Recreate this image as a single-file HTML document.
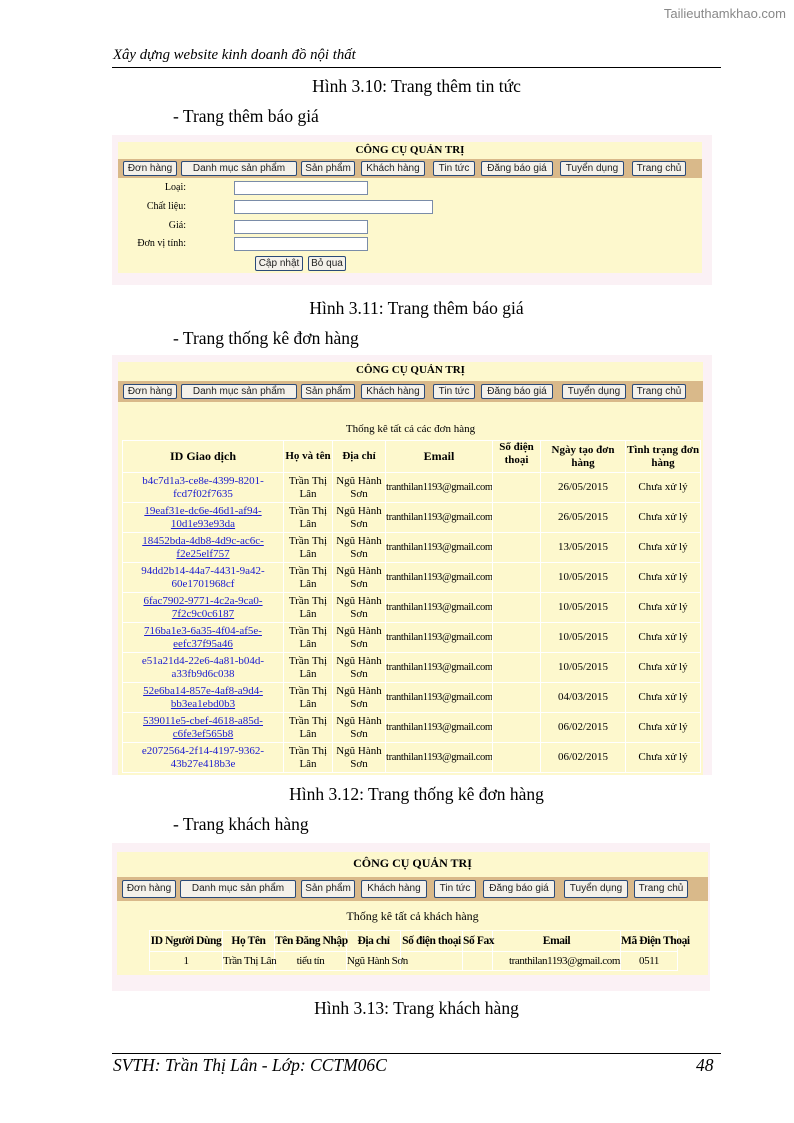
<!DOCTYPE html>
<html><head><meta charset="utf-8">
<style>
*{margin:0;padding:0;box-sizing:border-box}
body{width:794px;height:1123px;background:#fff;position:relative;font-family:"Liberation Serif",serif;color:#000;overflow:hidden}
.a{position:absolute}
.t{font-size:17.5px}
.c{left:112px;width:609px;text-align:center}
.shot{position:absolute;background:#fbf1f5}
.panel{position:absolute;background:#fdf8cd}
.nav{position:absolute;background:#d9b98a}
.btn{position:absolute;top:2px;height:15px;background:#f4f1ea;border:1px solid #2a4a78;border-radius:2px;font:10px "Liberation Sans",sans-serif;color:#222;text-align:center;line-height:13px;white-space:nowrap;overflow:hidden}
.ttl{position:absolute;left:0;right:0;text-align:center;font-weight:bold;font-size:11px}
.s{font-size:10px}
table{border-collapse:collapse;position:absolute;font-size:11px;table-layout:fixed}
.ord td,.ord th{border:1px solid #fff;text-align:center;line-height:13px;overflow:hidden}
.ord th{font-weight:bold}
.ord td.id{color:#1a1ad0}
.ord td.u{text-decoration:underline}
.ord td.e{text-align:left;white-space:nowrap;letter-spacing:-0.35px;font-size:10.5px}
.kh td,.kh th{white-space:nowrap;letter-spacing:-0.4px;padding:0;overflow:visible}
input.f{position:absolute;height:14px;background:#fff;border:1px solid #7a8ca8}
</style></head><body>
<div class="a" style="right:8px;top:6px;font:13px 'Liberation Sans',sans-serif;color:#888">Tailieuthamkhao.com</div>
<div class="a" style="left:113px;top:47px;font-size:14.8px;font-style:italic">Xây dựng website kinh doanh đồ nội thất</div>
<div class="a" style="left:112px;top:67px;width:609px;height:1px;background:#000"></div>

<div class="a t c" style="top:76px">Hình 3.10: Trang thêm tin tức</div>
<div class="a t" style="left:173px;top:106px">- Trang thêm báo giá</div>

<div class="shot" style="left:112px;top:135px;width:600px;height:150px"></div>
<div class="panel" style="left:118px;top:142px;width:584px;height:131px">
 <div class="ttl" style="top:2px">CÔNG CỤ QUẢN TRỊ</div>
 <div class="nav" style="left:0;top:17px;width:584px;height:19px">
  <div class="btn" style="left:5px;width:54px">Đơn hàng</div>
  <div class="btn" style="left:63px;width:116px">Danh mục sản phẩm</div>
  <div class="btn" style="left:183px;width:54px">Sản phẩm</div>
  <div class="btn" style="left:243px;width:64px">Khách hàng</div>
  <div class="btn" style="left:315px;width:42px">Tin tức</div>
  <div class="btn" style="left:363px;width:72px">Đăng báo giá</div>
  <div class="btn" style="left:442px;width:64px">Tuyển dụng</div>
  <div class="btn" style="left:514px;width:54px">Trang chủ</div>
 </div>
 <div class="a s" style="right:516px;top:40px">Loại:</div>
 <div class="a s" style="right:516px;top:59px">Chất liệu:</div>
 <div class="a s" style="right:516px;top:78px">Giá:</div>
 <div class="a s" style="right:516px;top:96px">Đơn vị tính:</div>
 <input class="f" style="left:116px;top:39px;width:134px">
 <input class="f" style="left:116px;top:58px;width:199px">
 <input class="f" style="left:116px;top:78px;width:134px">
 <input class="f" style="left:116px;top:95px;width:134px">
 <div class="btn" style="left:137px;top:114px;width:48px">Cập nhật</div>
 <div class="btn" style="left:190px;top:114px;width:38px">Bỏ qua</div>
</div>

<div class="a t c" style="top:298px">Hình 3.11: Trang thêm báo giá</div>
<div class="a t" style="left:173px;top:328px">- Trang thống kê đơn hàng</div>

<div class="shot" style="left:112px;top:355px;width:600px;height:420px"></div>
<div class="panel" style="left:118px;top:362px;width:585px;height:413px;overflow:hidden">
 <div class="ttl" style="top:2px">CÔNG CỤ QUẢN TRỊ</div>
 <div class="nav" style="left:0;top:19px;width:585px;height:21px">
  <div class="btn" style="left:5px;width:54px;top:3px">Đơn hàng</div>
  <div class="btn" style="left:63px;width:116px;top:3px">Danh mục sản phẩm</div>
  <div class="btn" style="left:183px;width:54px;top:3px">Sản phẩm</div>
  <div class="btn" style="left:243px;width:64px;top:3px">Khách hàng</div>
  <div class="btn" style="left:315px;width:42px;top:3px">Tin tức</div>
  <div class="btn" style="left:363px;width:72px;top:3px">Đăng báo giá</div>
  <div class="btn" style="left:444px;width:64px;top:3px">Tuyển dụng</div>
  <div class="btn" style="left:514px;width:54px;top:3px">Trang chủ</div>
 </div>
 <div class="a" style="left:0;right:0;top:61px;text-align:center;font-size:11px">Thống kê tất cả các đơn hàng</div>
 <table class="ord" style="left:4px;top:78px;width:578px">
  <colgroup><col style="width:161px"><col style="width:49px"><col style="width:53px"><col style="width:107px"><col style="width:48px"><col style="width:85px"><col style="width:75px"></colgroup>
  <tr style="height:32px"><th style="font-size:12px">ID Giao dịch</th><th>Họ và tên</th><th>Địa chỉ</th><th style="font-size:12px">Email</th><th style="vertical-align:top">Số điện thoại</th><th>Ngày tạo đơn hàng</th><th>Tình trạng đơn hàng</th></tr>
  <tr style="height:30px"><td class="id">b4c7d1a3-ce8e-4399-8201-fcd7f02f7635</td><td>Trần Thị Lân</td><td>Ngũ Hành Sơn</td><td class="e">tranthilan1193@gmail.com</td><td></td><td>26/05/2015</td><td>Chưa xử lý</td></tr>
  <tr style="height:30px"><td class="id u">19eaf31e-dc6e-46d1-af94-10d1e93e93da</td><td>Trần Thị Lân</td><td>Ngũ Hành Sơn</td><td class="e">tranthilan1193@gmail.com</td><td></td><td>26/05/2015</td><td>Chưa xử lý</td></tr>
  <tr style="height:30px"><td class="id u">18452bda-4db8-4d9c-ac6c-f2e25elf757</td><td>Trần Thị Lân</td><td>Ngũ Hành Sơn</td><td class="e">tranthilan1193@gmail.com</td><td></td><td>13/05/2015</td><td>Chưa xử lý</td></tr>
  <tr style="height:30px"><td class="id">94dd2b14-44a7-4431-9a42-60e1701968cf</td><td>Trần Thị Lân</td><td>Ngũ Hành Sơn</td><td class="e">tranthilan1193@gmail.com</td><td></td><td>10/05/2015</td><td>Chưa xử lý</td></tr>
  <tr style="height:30px"><td class="id u">6fac7902-9771-4c2a-9ca0-7f2c9c0c6187</td><td>Trần Thị Lân</td><td>Ngũ Hành Sơn</td><td class="e">tranthilan1193@gmail.com</td><td></td><td>10/05/2015</td><td>Chưa xử lý</td></tr>
  <tr style="height:30px"><td class="id u">716ba1e3-6a35-4f04-af5e-eefc37f95a46</td><td>Trần Thị Lân</td><td>Ngũ Hành Sơn</td><td class="e">tranthilan1193@gmail.com</td><td></td><td>10/05/2015</td><td>Chưa xử lý</td></tr>
  <tr style="height:30px"><td class="id">e51a21d4-22e6-4a81-b04d-a33fb9d6c038</td><td>Trần Thị Lân</td><td>Ngũ Hành Sơn</td><td class="e">tranthilan1193@gmail.com</td><td></td><td>10/05/2015</td><td>Chưa xử lý</td></tr>
  <tr style="height:30px"><td class="id u">52e6ba14-857e-4af8-a9d4-bb3ea1ebd0b3</td><td>Trần Thị Lân</td><td>Ngũ Hành Sơn</td><td class="e">tranthilan1193@gmail.com</td><td></td><td>04/03/2015</td><td>Chưa xử lý</td></tr>
  <tr style="height:30px"><td class="id u">539011e5-cbef-4618-a85d-c6fe3ef565b8</td><td>Trần Thị Lân</td><td>Ngũ Hành Sơn</td><td class="e">tranthilan1193@gmail.com</td><td></td><td>06/02/2015</td><td>Chưa xử lý</td></tr>
  <tr style="height:30px"><td class="id">e2072564-2f14-4197-9362-43b27e418b3e</td><td>Trần Thị Lân</td><td>Ngũ Hành Sơn</td><td class="e">tranthilan1193@gmail.com</td><td></td><td>06/02/2015</td><td>Chưa xử lý</td></tr>
 </table>
</div>

<div class="a t c" style="top:784px">Hình 3.12: Trang thống kê đơn hàng</div>
<div class="a t" style="left:173px;top:814px">- Trang khách hàng</div>

<div class="shot" style="left:112px;top:843px;width:598px;height:148px"></div>
<div class="panel" style="left:117px;top:852px;width:591px;height:123px">
 <div class="ttl" style="top:4px;font-size:12px">CÔNG CỤ QUẢN TRỊ</div>
 <div class="nav" style="left:0;top:25px;width:591px;height:24px">
  <div class="btn" style="left:5px;width:54px;top:3px;height:18px;line-height:16px">Đơn hàng</div>
  <div class="btn" style="left:63px;width:116px;top:3px;height:18px;line-height:16px">Danh mục sản phẩm</div>
  <div class="btn" style="left:184px;width:54px;top:3px;height:18px;line-height:16px">Sản phẩm</div>
  <div class="btn" style="left:244px;width:66px;top:3px;height:18px;line-height:16px">Khách hàng</div>
  <div class="btn" style="left:317px;width:42px;top:3px;height:18px;line-height:16px">Tin tức</div>
  <div class="btn" style="left:366px;width:72px;top:3px;height:18px;line-height:16px">Đăng báo giá</div>
  <div class="btn" style="left:447px;width:64px;top:3px;height:18px;line-height:16px">Tuyển dụng</div>
  <div class="btn" style="left:517px;width:54px;top:3px;height:18px;line-height:16px">Trang chủ</div>
 </div>
 <div class="a" style="left:0;right:0;top:57px;text-align:center;font-size:12px">Thống kê tất cả khách hàng</div>
 <table class="ord kh" style="left:32px;top:78px;width:528px;border:1px solid #999;font-size:11px">
  <colgroup><col style="width:73px"><col style="width:52px"><col style="width:72px"><col style="width:54px"><col style="width:62px"><col style="width:30px"><col style="width:128px"><col style="width:57px"></colgroup>
  <tr style="height:21px;font-size:11.5px"><th>ID Người Dùng</th><th>Họ Tên</th><th>Tên Đăng Nhập</th><th>Địa chỉ</th><th>Số điện thoại</th><th>Số Fax</th><th>Email</th><th>Mã Điện Thoại</th></tr>
  <tr style="height:19px"><td>1</td><td>Trần Thị Lân</td><td>tiểu tín</td><td>Ngũ Hành Sơn</td><td></td><td></td><td style="text-align:right">tranthilan1193@gmail.com</td><td>0511</td></tr>
 </table>
</div>

<div class="a t c" style="top:998px">Hình 3.13: Trang khách hàng</div>

<div class="a" style="left:112px;top:1053px;width:609px;height:1px;background:#000"></div>
<div class="a" style="left:113px;top:1055px;font-size:17.5px;font-style:italic">SVTH: Trần Thị Lân - Lớp: CCTM06C</div>
<div class="a" style="left:696px;top:1055px;font-size:17.5px;font-style:italic">48</div>
</body></html>
